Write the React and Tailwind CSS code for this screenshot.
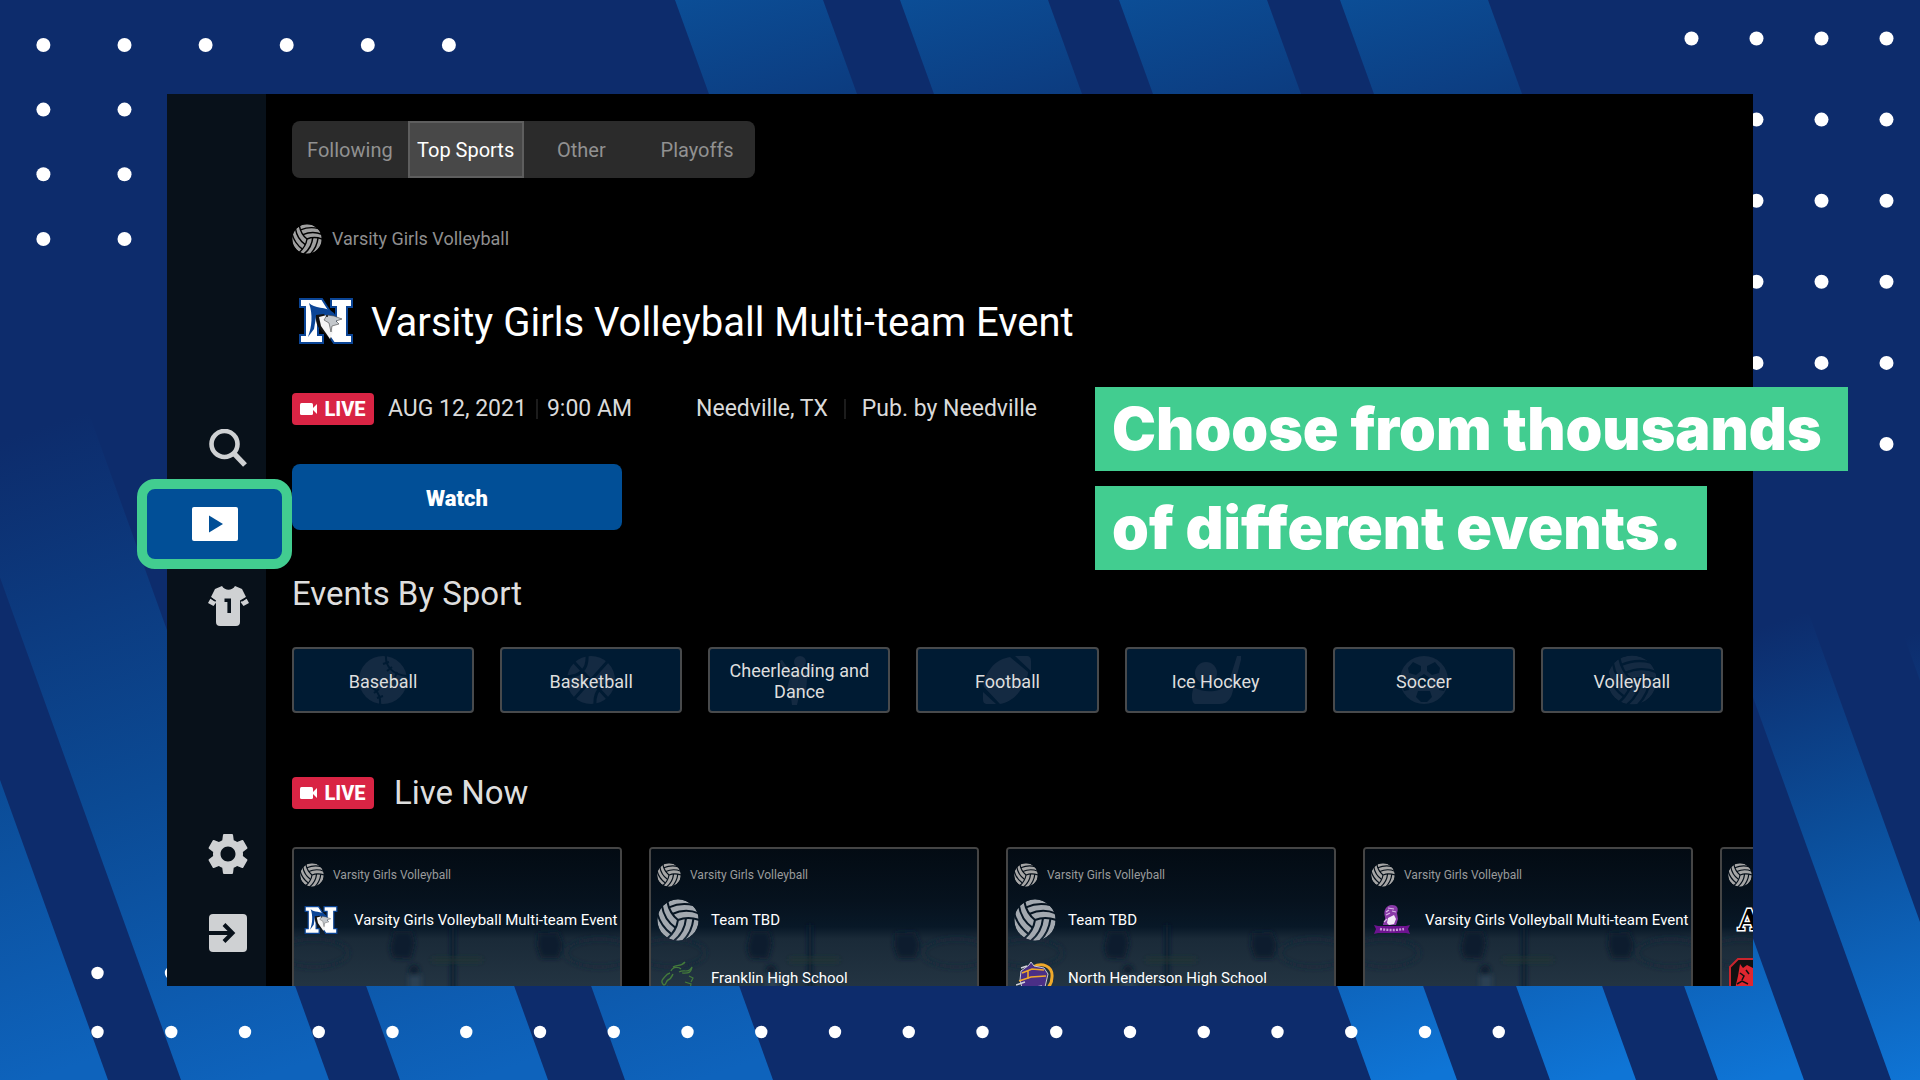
import { useId } from "react";
import { MdSettings } from "react-icons/md";

const range = (n) => Array.from({ length: n }, (_, i) => i);

const TOP_STRIPES = [675, 900, 1119, 1340];
const LEFT_STRIPES = [-40, 181, 400, 625];
const RIGHT_STRIPES = [1371, 1550, 1718, 1891, 2064];

function Dots({ xs, ys, r }) {
  return ys.flatMap((y) => xs.map((x) => <circle key={`${x}-${y}`} cx={x} cy={y} r={r} />));
}

function Backdrop() {
  return (
    <svg
      className="absolute inset-0 h-full w-full"
      viewBox="0 0 1920 1080"
      preserveAspectRatio="xMidYMid slice"
      aria-hidden="true"
    >
      <defs>
        <linearGradient id="fadeTop" gradientUnits="userSpaceOnUse" x1="0" y1="-20" x2="80" y2="250">
          <stop offset="0" stopColor="#0b5099" />
          <stop offset="1" stopColor="#0d2c6c" />
        </linearGradient>
        <linearGradient id="fadeLeft" gradientUnits="userSpaceOnUse" x1="-150" y1="-650" x2="74" y2="0">
          <stop offset="0" stopColor="#0d2c6c" />
          <stop offset="0.55" stopColor="#0b4a94" />
          <stop offset="1" stopColor="#0e63bc" />
        </linearGradient>
        <linearGradient id="fadeRight" gradientUnits="userSpaceOnUse" x1="-110" y1="-460" x2="42" y2="0">
          <stop offset="0" stopColor="#0d2c6c" />
          <stop offset="0.45" stopColor="#0b4e9a" />
          <stop offset="1" stopColor="#0f75d6" />
        </linearGradient>
      </defs>
      <rect width="1920" height="1080" fill="#0d2c6c" />
      {TOP_STRIPES.map((x) => (
        <polygon key={x} transform={`translate(${x} 0)`} points="0,0 148,0 242,260 94,260" fill="url(#fadeTop)" />
      ))}
      {LEFT_STRIPES.map((x) => (
        <polygon key={x} transform={`translate(${x} 1080)`} points="0,0 148,0 -94,-672 -242,-672" fill="url(#fadeLeft)" />
      ))}
      {RIGHT_STRIPES.map((x) => (
        <polygon key={x} transform={`translate(${x} 1080)`} points="0,0 86,0 -82,-466 -168,-466" fill="url(#fadeRight)" />
      ))}
      <g fill="#fff">
        <Dots xs={range(6).map((i) => 43.4 + i * 81.1)} ys={[45]} r={7} />
        <Dots xs={[43.4, 124.5]} ys={[109.6, 174.2, 239]} r={7} />
        <Dots xs={[1691.5, 1756.5, 1821.5, 1886.5]} ys={range(6).map((i) => 38.5 + i * 81.1)} r={7} />
        <Dots xs={[97.5, 171]} ys={[973]} r={6.2} />
        <Dots xs={range(20).map((i) => 97.5 + i * 73.75)} ys={[1032]} r={6.2} />
      </g>
    </svg>
  );
}

function Volleyball({ className }) {
  const id = useId();
  return (
    <svg viewBox="-63 -63 126 126" className={className} aria-hidden="true">
      <mask id={id} maskUnits="userSpaceOnUse" x="-63" y="-63" width="126" height="126">
        <circle r="62" fill="#fff" />
        <g fill="none" stroke="#000" strokeWidth="6">
          {[0, 120, 240].map((a) => (
            <g key={a} transform={`rotate(${a})`}>
              <path d="M0 0Q30-12 64 0" />
              <path d="M-17-18Q22-36 62-20" />
              <path d="M-27-38Q10-54 48-44" />
            </g>
          ))}
        </g>
      </mask>
      <circle r="62" fill="currentColor" mask={`url(#${id})`} />
    </svg>
  );
}

function BlueJayLogo({ className }) {
  return (
    <svg viewBox="0 0 54 46" className={className} aria-hidden="true">
      <path
        d="M1 1h22l14 22V9h-5V1h21v8h-5v28h5v8H35L19 22v15h5v8H1v-8h5V9H1z"
        fill="#fff"
        stroke="#0b4596"
        strokeWidth="2"
      />
      <path d="M10 5c5 6 17 3 25 10l3 5-8-2-13 1-2 12-6 8c4-11 5-22 1-34z" fill="#0b4596" />
      <path d="M17 17l8-1 5 9 2 17-5-5c-7-5-11-11-10-20z" fill="#111" />
      <path d="M20 19l8-2 4 5 2 12-3 7-9-13z" fill="#f4f4f4" />
      <path d="M28 17l7 1 8 3-6 2 3 3-7 2-1 6-2-9-5-3z" fill="#c4c8cc" stroke="#444" strokeWidth=".6" />
      <circle cx="28" cy="18" r="1" fill="#111" />
    </svg>
  );
}

function GreenHorseLogo({ className }) {
  return (
    <svg viewBox="0 0 34 34" className={className} fill="none" stroke="#437a3b" aria-hidden="true">
      <path d="M12 6c4-3 8 0 12-5M10 10c2-5 8-4 10-2M9 12c-4 1-5 4-7 6-2 2-1 5 1 6 2 0 2-4 4-5 3-1 4-4 5-6" strokeWidth="1.4" />
      <path d="M18 11c5-3 9 2 13-5-1 7-5 6-10 6M28 15l4 2-2 4M24 21l6 2-1 5 3 5M4 27l3-2M10 30l-2 4" strokeWidth="1.2" />
    </svg>
  );
}

function KnightLogo({ className }) {
  return (
    <svg viewBox="0 0 38 34" className={className} aria-hidden="true">
      <path d="M17 6C26 1 37 5 36 16c0 9-6 13-13 18" fill="none" stroke="#f0a92b" strokeWidth="3" />
      <path d="M5 10l8-6 2-3 3 4 10 2 4 6-3 13-9 8H8L4 19z" fill="#4b2f86" stroke="#c9c9d2" strokeWidth="1" />
      <path d="M6 12l10-4 12 1M3 20l12-4 15-1M12 9v9" stroke="#f0a92b" strokeWidth="1.6" fill="none" />
      <path d="M0 24l9-3M5 7l6-2M10 28l10-2 6-1" stroke="#d4d4dc" strokeWidth="1.4" fill="none" />
    </svg>
  );
}

function TrojanLogo({ className }) {
  return (
    <svg viewBox="0 0 36 30" className={className} aria-hidden="true">
      <path d="M9 20c0-3 3-5 2-8C9 6 12 0 18 0c5 0 7 3 5 8l1 6-2 6z" fill="#8a3aa8" />
      <path d="M14 3l6 1M12 7l3-2M12 10l4-2M18 6l4 1M10 17l3-3" stroke="#d9b8e6" strokeWidth="1.2" />
      <path d="M14 13l6-3 2 4-2 5-5 1-2-2z" fill="#f2e8f6" />
      <path d="M0 20l4 1h28l4-1-2 4 2 5-4-1H4l-4 1 2-5z" fill="#6d1390" />
      <path d="M6 24q12 2 24 0" stroke="#c79ad8" strokeWidth="2.4" strokeDasharray="2 1.2" fill="none" />
    </svg>
  );
}

function LetterALogo({ className }) {
  return (
    <svg viewBox="0 0 34 26" className={className} aria-hidden="true">
      <text
        x="17"
        y="23"
        textAnchor="middle"
        fontFamily="DejaVu Serif"
        fontWeight="700"
        fontSize="28"
        fill="#000"
        stroke="#fff"
        strokeWidth="3"
        paintOrder="stroke"
      >
        A
      </text>
    </svg>
  );
}

function BulldogLogo({ className }) {
  return (
    <svg viewBox="0 0 40 40" className={className} aria-hidden="true">
      <path d="M9 1h22l8 8v22l-8 8H9l-8-8V9z" fill="#111" stroke="#c9252d" strokeWidth="2" />
      <path d="M11 6l3 4 4-3 6 3 5-4 3 10-1 16-7 6H12l-6-7 3-13z" fill="#e0262f" />
      <path d="M11 15l4 3-2 4M8 26l5-3 6 3M12 32l8-2M17 12l3 4" stroke="#111" strokeWidth="1.5" fill="none" />
    </svg>
  );
}

function BaseballArt() {
  return (
    <>
      <circle cx="25" cy="25" r="24" fill="currentColor" />
      <g fill="none" stroke="#001b33" strokeWidth="2">
        <path d="M28 0C27 12 35 20 50 21M22 50c1-12-5-20-22-21" />
        <path d="M25 9l6-2M29 16l5-4M37 22l2-5M25 41l-6 2M21 34l-5 4M13 28l-2 5" />
      </g>
    </>
  );
}

function BasketballArt() {
  return (
    <>
      <circle cx="25" cy="25" r="24" fill="currentColor" />
      <g fill="none" stroke="#001b33" strokeWidth="3">
        <path d="M8 7l34 37M42 6L8 44M21 0c1 14-6 21-21 22M29 50c-1-14 6-21 21-22" />
      </g>
    </>
  );
}

function CheerArt() {
  return (
    <g fill="currentColor">
      <circle cx="26" cy="7" r="6" />
      <path d="M8 5c4 5 6 10 12 12h11l8-9 3 2-9 14-1 14-6-1-3 13h-5l-2-15-3-1 3-12C10 18 8 11 6 6z" />
    </g>
  );
}

function FootballArt() {
  return (
    <g fill="currentColor">
      <path d="M28 2c-6 1-14 4-19 11C3 21 0 28 2 32l16 17c7-1 14-5 19-12 7-9 9-16 9-20z" />
      <path d="M33 1h11c4 0 5 2 5 5v10zM1 37l13 12H6c-4 0-5-2-5-5z" />
    </g>
  );
}

function HockeyArt() {
  return (
    <g fill="currentColor">
      <circle cx="15" cy="18" r="11" />
      <path d="M3 32c10 7 26 5 34-2l9-29h5L41 39c-2 6-6 10-12 10H5c-5 0-5-11-2-17z" />
    </g>
  );
}

function SoccerArt() {
  return (
    <>
      <circle cx="25" cy="25" r="24" fill="currentColor" />
      <g fill="#001b33">
        <path d="M14 7l8 4v5l-5 4-7-2-1-5zM36 7l-8 4v5l5 4 7-2 1-5zM25 19l6 4-2 7h-8l-2-7zM2 24l6 3 2 8-5 1c-2-4-3-8-3-12zM48 24l-6 3-2 8 5 1c2-4 3-8 3-12zM19 36h12l2 6-5 5h-6l-5-5z" />
      </g>
    </>
  );
}

const SPORTS = [
  ["Baseball", BaseballArt],
  ["Basketball", BasketballArt],
  ["Cheerleading and Dance", CheerArt],
  ["Football", FootballArt],
  ["Ice Hockey", HockeyArt],
  ["Soccer", SoccerArt],
  ["Volleyball", null],
];

function SportTile({ name, Art }) {
  return (
    <button
      type="button"
      className="relative flex h-[66px] items-center justify-center rounded-sm border-2 border-[#484a4c] bg-[#001b33] px-3 pt-0.5 text-center text-lg leading-[21px] text-[#dedede]"
    >
      <span className="absolute inset-0 flex items-center justify-center text-[#142a42]">
        {Art ? (
          <svg viewBox="0 0 50 50" className="size-[50px]" aria-hidden="true">
            <Art />
          </svg>
        ) : (
          <Volleyball className="size-[50px]" />
        )}
      </span>
      <span className="relative">{name}</span>
    </button>
  );
}

function LiveBadge() {
  return (
    <span className="flex h-8 w-[82px] shrink-0 items-center justify-center gap-[7px] rounded-[4px] bg-[#d92444] text-xl font-extrabold leading-none text-white">
      <svg viewBox="0 0 17 12" className="h-3 w-[17px]" fill="currentColor" aria-hidden="true">
        <rect width="13" height="12" rx="1.5" />
        <path d="M12 6l5-5v10z" />
      </svg>
      LIVE
    </span>
  );
}

function ArenaPhoto() {
  const id = useId();
  return (
    <svg viewBox="0 0 326 236" preserveAspectRatio="none" className="absolute inset-0 h-full w-full" aria-hidden="true">
      <defs>
        <linearGradient id={`${id}g`} x1="0" y1="0" x2="0" y2="1">
          <stop offset="0" stopColor="#030b13" />
          <stop offset="0.22" stopColor="#06121e" />
          <stop offset="0.33" stopColor="#081827" />
          <stop offset="0.38" stopColor="#1a2a38" />
          <stop offset="0.58" stopColor="#233442" />
          <stop offset="1" stopColor="#263746" />
        </linearGradient>
        <filter id={`${id}b`}>
          <feGaussianBlur stdDeviation="2.5" />
        </filter>
      </defs>
      <rect width="326" height="236" fill={`url(#${id}g)`} />
      <g filter={`url(#${id}b)`}>
        <ellipse cx="20" cy="104" rx="34" ry="14" fill="none" stroke="#172838" strokeWidth="2" />
        <ellipse cx="306" cy="104" rx="34" ry="14" fill="none" stroke="#172838" strokeWidth="2" />
        <path d="M100 82l18 0 3 12-4 16-18-1-3-10zM244 84l20-1 5 12-4 14-18 0-4-12zM157 76h4v70h-4z" fill="#0c1d2e" />
        <circle cx="120" cy="121" r="5" fill="#0b1c2d" />
        <path d="M115 126h12v20h-12z" fill="#2a3f52" />
        <path d="M138 109h50v4h-50z" fill="#24372f" opacity=".7" />
      </g>
    </svg>
  );
}

const MULTI = "Varsity Girls Volleyball Multi-team Event";
const ballLogo = <Volleyball className="size-[42px] text-[#a3a9b0]" />;

const EVENTS = [
  [[<BlueJayLogo className="h-[28px] w-[34px]" />, MULTI]],
  [
    [ballLogo, "Team TBD"],
    [<GreenHorseLogo className="size-[34px]" />, "Franklin High School"],
  ],
  [
    [ballLogo, "Team TBD"],
    [<KnightLogo className="h-[34px] w-[38px]" />, "North Henderson High School"],
  ],
  [[<TrojanLogo className="h-[30px] w-[36px]" />, MULTI]],
  [
    [<LetterALogo className="h-[26px] w-[34px]" />, ""],
    [<BulldogLogo className="size-10" />, ""],
  ],
];

function EventCard({ teams }) {
  return (
    <article className="relative h-60 w-[330px] shrink-0 overflow-hidden rounded-sm border-2 border-[#454545]">
      <ArenaPhoto />
      <div className="relative flex flex-col pl-[6px] pt-[14px]">
        <div className="flex h-6 items-center gap-[9px] text-xs text-[#9a9b9c]">
          <Volleyball className="size-6 shrink-0 text-[#a6a6a6]" />
          <span className="whitespace-nowrap">Varsity Girls Volleyball</span>
        </div>
        <div className="mt-3 flex flex-col gap-4">
          {teams.map(([logo, name], i) => (
            <div key={i} className="flex h-[42px] items-center gap-3 text-[15px] text-white">
              <span className="flex w-[42px] shrink-0 items-center justify-center">{logo}</span>
              <span className="whitespace-nowrap">{name}</span>
            </div>
          ))}
        </div>
      </div>
    </article>
  );
}

function Sidebar() {
  return (
    <nav className="relative z-10 flex w-[99px] shrink-0 flex-col justify-between bg-[#08111a] pb-[34px] pt-[335px] text-[#cfd1d3]">
      <div className="flex flex-col items-start">
        <button type="button" aria-label="Search" className="ml-[42px]">
          <svg viewBox="0 0 38 38" className="size-[38px]" fill="none" stroke="currentColor" aria-hidden="true">
            <circle cx="15.5" cy="15" r="13" strokeWidth="4.6" />
            <path d="M24.5 24l11.5 12" strokeWidth="5.4" />
          </svg>
        </button>
        <button
          type="button"
          aria-label="Events"
          className="-ml-[30px] mt-3 flex h-[90px] w-[155px] items-center justify-center rounded-[18px] border-10 border-[#42cd90] bg-[#014f97]"
        >
          <svg viewBox="0 0 46 34" className="h-[34px] w-[46px]" aria-hidden="true">
            <rect width="46" height="34" rx="2" fill="#fff" />
            <path d="M17 8.5v17L31 17z" fill="#014f97" />
          </svg>
        </button>
        <button type="button" aria-label="Teams" className="ml-[41px] mt-[17px]">
          <svg viewBox="0 0 41 40" className="h-10 w-[41px]" aria-hidden="true">
            <g fill="currentColor">
              <path d="M14 0c3 5 10 5 13 0l7 3 4 8-6 3.500V36q0 4-4 4H12q-4 0-4-4V14.500L3 11l4-8z" />
              <path d="M2.500 12.500l6 3.500-3 4-5.500-3zM38.500 12.500l-6 3.500 3 4 5.500-3z" />
            </g>
            <path d="M7 15l-5-3.500M34 15l5-3.500" stroke="#08111a" strokeWidth="1.5" />
            <path d="M16.500 12.500h6.500v14.500h-3.600V16h-2.900z" fill="#08111a" />
          </svg>
        </button>
      </div>
      <div className="flex flex-col items-start gap-[35px]">
        <button type="button" aria-label="Settings" className="ml-[36px]">
          <MdSettings className="size-[50px]" />
        </button>
        <button type="button" aria-label="Sign out" className="ml-[42px]">
          <svg viewBox="0 0 38 38" className="size-[38px]" aria-hidden="true">
            <rect width="38" height="38" rx="4" fill="currentColor" />
            <path d="M0 19h23M15 10.500l8.500 8.500-8.500 8.500" fill="none" stroke="#08111a" strokeWidth="4" />
          </svg>
        </button>
      </div>
    </nav>
  );
}

const TABS = ["Following", "Top Sports", "Other", "Playoffs"];

export default function App() {
  return (
    <div className="relative flex h-screen overflow-hidden bg-[#0d2c6c] px-[167px] py-[94px] font-['Roboto',sans-serif]">
      <Backdrop />
      <div className="relative flex min-w-0 flex-1 bg-black">
        <Sidebar />
        <main className="min-w-0 flex-1 overflow-hidden pl-[26px] pt-[27px]">
          <div role="tablist" className="grid h-[57px] w-[463px] grid-cols-4 overflow-hidden rounded-lg bg-[#2b2b2b] text-xl text-[#919191]">
            {TABS.map((tab) => (
              <button
                key={tab}
                type="button"
                role="tab"
                aria-selected={tab === "Top Sports"}
                className="whitespace-nowrap aria-selected:border-2 aria-selected:border-[#5e5e5e] aria-selected:bg-[#484848] aria-selected:text-white"
              >
                {tab}
              </button>
            ))}
          </div>

          <div className="mt-[46px] flex h-[30px] items-center gap-[10px] text-lg text-[#8f8f8f]">
            <Volleyball className="size-[30px] text-[#a0a0a0]" />
            Varsity Girls Volleyball
          </div>

          <div className="mt-11 flex h-[50px] items-center gap-[18px] pl-[7px] text-white">
            <BlueJayLogo className="mb-1 h-[46px] w-[54px]" />
            <h1 className="text-[40px] leading-[50px]">Varsity Girls Volleyball Multi-team Event</h1>
          </div>

          <div className="mt-11 flex h-[34px] items-center text-[23px] text-[#dadada]">
            <LiveBadge />
            <span className="ml-[14px]">AUG 12, 2021</span>
            <span className="mx-[9px] h-5 w-0.5 bg-[#1c1c1c]" />
            <span>9:00 AM</span>
            <span className="ml-[64px]">Needville, TX</span>
            <span className="mx-4 h-5 w-0.5 bg-[#1c1c1c]" />
            <span>Pub. by Needville</span>
          </div>

          <button type="button" className="mt-[38px] h-[66px] w-[330px] rounded-lg bg-[#014f97] pt-0.5 text-[22px] font-black text-white">
            Watch
          </button>

          <h2 className="mt-[44px] text-[33px] leading-10 text-[#dedede]">Events By Sport</h2>
          <div className="mr-[30px] mt-[33px] grid grid-cols-7 gap-[26px]">
            {SPORTS.map(([name, Art]) => (
              <SportTile key={name} name={name} Art={Art} />
            ))}
          </div>

          <div className="mt-[60px] flex h-10 items-center gap-5">
            <LiveBadge />
            <h2 className="text-[33px] leading-10 text-[#dedede]">Live Now</h2>
          </div>
          <div className="mt-[34px] flex gap-[27px]">
            {EVENTS.map((teams, i) => (
              <EventCard key={i} teams={teams} />
            ))}
          </div>
        </main>
      </div>

      <div className="absolute left-[1095px] top-[387px] flex flex-col items-start gap-[15px] whitespace-nowrap font-['Inter',sans-serif] text-[59px] font-black leading-[84px] text-white">
        <p className="bg-[#42cd90] pl-[17px] pr-[26px]">Choose from thousands</p>
        <p className="bg-[#42cd90] pl-[17px] pr-[26px]">of different events.</p>
      </div>
    </div>
  );
}
